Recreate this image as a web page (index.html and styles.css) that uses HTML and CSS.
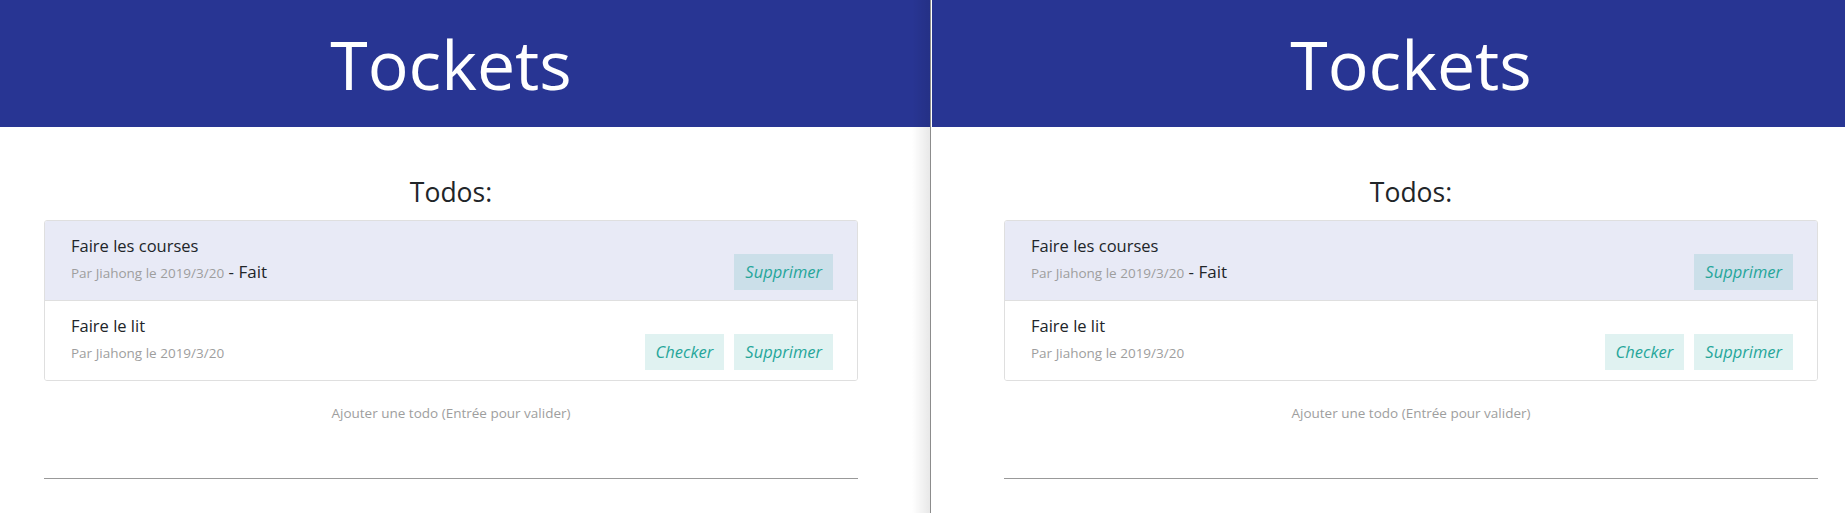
FILE: index.html
```html
<!DOCTYPE html>
<html lang="fr">
<head>
<meta charset="utf-8">
<title>Tockets</title>
<link rel="stylesheet" href="styles.css">
</head>
<body>
  <div class="pane pane--left">
    <header class="header"><h1 class="title">Tockets</h1></header>
    <main class="main">
      <h2 class="subtitle">Todos:</h2>
      <ul class="todo-list">
        <li class="todo todo--done">
          <div class="todo-text">
            <div class="todo-title">Faire les courses</div>
            <div class="todo-meta"><small class="todo-author">Par Jiahong le 2019/3/20</small> - Fait</div>
          </div>
          <div class="todo-actions">
            <button class="btn">Supprimer</button>
          </div>
        </li>
        <li class="todo">
          <div class="todo-text">
            <div class="todo-title">Faire le lit</div>
            <div class="todo-meta"><small class="todo-author">Par Jiahong le 2019/3/20</small></div>
          </div>
          <div class="todo-actions">
            <button class="btn">Checker</button>
            <button class="btn">Supprimer</button>
          </div>
        </li>
      </ul>
      <input class="new-todo" type="text" placeholder="Ajouter une todo (Entrée pour valider)">
      <div class="rule"></div>
    </main>
    <div class="pane-shadow"></div>
  </div>
  <div class="pane pane--right">
    <header class="header"><h1 class="title">Tockets</h1></header>
    <main class="main">
      <h2 class="subtitle">Todos:</h2>
      <ul class="todo-list">
        <li class="todo todo--done">
          <div class="todo-text">
            <div class="todo-title">Faire les courses</div>
            <div class="todo-meta"><small class="todo-author">Par Jiahong le 2019/3/20</small> - Fait</div>
          </div>
          <div class="todo-actions">
            <button class="btn">Supprimer</button>
          </div>
        </li>
        <li class="todo">
          <div class="todo-text">
            <div class="todo-title">Faire le lit</div>
            <div class="todo-meta"><small class="todo-author">Par Jiahong le 2019/3/20</small></div>
          </div>
          <div class="todo-actions">
            <button class="btn">Checker</button>
            <button class="btn">Supprimer</button>
          </div>
        </li>
      </ul>
      <input class="new-todo" type="text" placeholder="Ajouter une todo (Entrée pour valider)">
      <div class="rule"></div>
    </main>
  </div>
</body>
</html>
```

FILE: styles.css
```css
* { box-sizing: border-box; }

html, body {
  margin: 0;
  padding: 0;
  background: #fff;
}

body {
  display: flex;
  width: 1845px;
  height: 513px;
  overflow: hidden;
  font-family: "Open Sans", "Noto Sans", sans-serif;
  color: #212529;
}

.pane {
  position: relative;
  flex: 0 0 auto;
  height: 513px;
  background: #fff;
}

.pane--left {
  --pl: 0px;
  --pr: 28px;
  width: 931px;
  border-right: 1px solid #8c8c8c;
}

.pane--right {
  --pl: 28px;
  --pr: 0px;
  width: 931px;
  border-left: 1px solid #fff;
}

.pane-shadow {
  position: absolute;
  top: 0;
  right: 0;
  bottom: 0;
  width: 18px;
  background: linear-gradient(to right, rgba(0,0,0,0), rgba(0,0,0,0.09));
  pointer-events: none;
}

.header {
  height: 127px;
  background: #283593;
  padding: 28px var(--pr) 0 var(--pl);
}

.title {
  margin: 0;
  font-size: 68px;
  line-height: 72px;
  font-weight: 400;
  color: #fff;
  text-align: center;
}

.main {
  padding: 0 calc(var(--pr) + 44px) 0 calc(var(--pl) + 44px);
}

.subtitle {
  margin: 48px 0 11px;
  font-size: 26.5px;
  line-height: 34px;
  font-weight: 400;
  text-align: center;
  color: #212529;
}

.todo-list {
  list-style: none;
  margin: 0;
  padding: 0;
  border: 1px solid #dfdfdf;
  border-radius: 3px;
  overflow: hidden;
}

.todo {
  display: flex;
  justify-content: space-between;
  align-items: flex-start;
  padding: 12px 24px 10px 26px;
  background: #fff;
}

.todo + .todo {
  border-top: 1px solid #dfdfdf;
  padding-bottom: 10px;
}

.todo--done {
  background: #e8eaf6;
}

.todo-text {
  padding-bottom: 5px;
}

.todo-title,
.todo-meta {
  font-size: 16.5px;
  line-height: 26px;
  height: 26px;
}

.todo-meta {
  font-size: 17px;
}

.todo-author {
  font-size: 13.5px;
  line-height: 1;
  color: #9e9e9e;
}

.todo-actions {
  align-self: flex-end;
  display: flex;
  gap: 10px;
}

.btn {
  height: 36px;
  padding: 0 11px;
  border: none;
  border-radius: 0;
  background: rgba(0, 150, 136, 0.12);
  color: #26a69a;
  font-family: "Open Sans", "Noto Sans", sans-serif;
  font-style: italic;
  font-size: 16.5px;
  line-height: 36px;
}

.new-todo {
  display: block;
  width: 100%;
  height: 20px;
  margin-top: 22px;
  padding: 0;
  border: none;
  outline: none;
  background: transparent;
  text-align: center;
  font-family: "Open Sans", "Noto Sans", sans-serif;
  font-size: 13.5px;
  line-height: 20px;
}

.new-todo::placeholder {
  color: #9e9e9e;
  opacity: 1;
}

.rule {
  margin-top: 55px;
  height: 1px;
  background: #999;
}
```
